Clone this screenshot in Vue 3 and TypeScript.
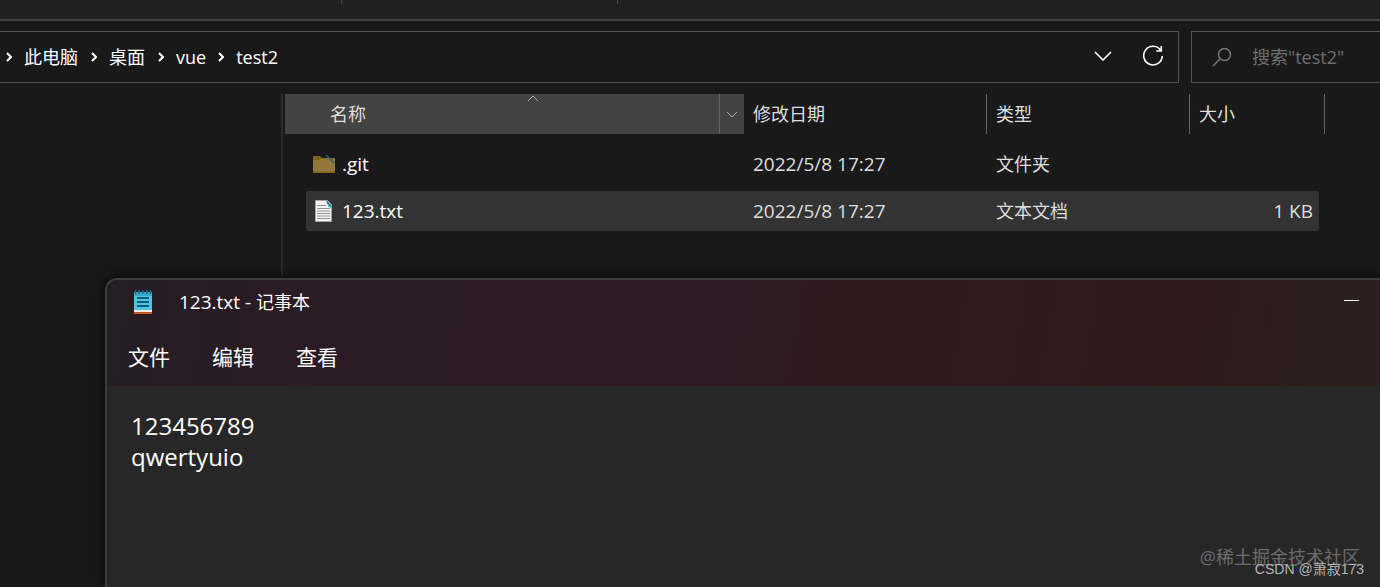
<script setup lang="ts">
import { ref } from 'vue'

interface FileRow {
  name: string
  date: string
  type: string
  size: string
  kind: 'folder' | 'text'
}

const crumbs = ['此电脑', '桌面', 'vue', 'test2']
const files: FileRow[] = [
  { name: '.git', date: '2022/5/8 17:27', type: '文件夹', size: '', kind: 'folder' },
  { name: '123.txt', date: '2022/5/8 17:27', type: '文本文档', size: '1 KB', kind: 'text' },
]
const menus = ['文件', '编辑', '查看']
const selected = ref('123.txt')
const query = ref('')
const content = ref('123456789\nqwertyuio')
const isLatin = (s: string) => /^[\x00-\x7f]*$/.test(s)
</script>

<template>
  <div class="desktop">
    <main class="explorer">
      <div class="ribbon"><i></i><i></i></div>
      <div class="toolbar">
        <div class="address">
          <nav class="crumbs" aria-label="路径">
            <template v-for="c in crumbs" :key="c">
              <svg class="sep" viewBox="0 0 6 10" aria-hidden="true"><path d="M1 1l4 4-4 4" /></svg>
              <a href="#" :class="{ latin: isLatin(c) }">{{ c }}</a>
            </template>
          </nav>
          <button class="tool" type="button" aria-label="历史">
            <svg width="18" height="10" viewBox="0 0 18 10"><path d="M1 1l8 8 8-8" /></svg>
          </button>
          <button class="tool" type="button" aria-label="刷新">
            <svg width="22" height="22" viewBox="0 0 22 22">
              <path d="M18.800 5.500A9.300 9.300 0 1 0 20.300 11M19.300 1V6H14.300" />
            </svg>
          </button>
        </div>
        <label class="search">
          <svg width="20" height="20" viewBox="0 0 20 20" aria-hidden="true">
            <circle cx="12.500" cy="7.500" r="6" /><path d="M8.200 11.800L1 19" />
          </svg>
          <input v-model="query" type="text" aria-label="搜索" placeholder="搜索&quot;test2&quot;" />
        </label>
      </div>
      <div class="panes">
        <aside class="side"></aside>
        <table class="files">
          <colgroup><col class="c-name" /><col class="c-date" /><col class="c-type" /><col class="c-size" /></colgroup>
          <thead>
            <tr>
              <th scope="col">
                <div class="head sorted">
                  <span>名称</span>
                  <svg class="caret" width="12" height="7" viewBox="0 0 12 7" aria-hidden="true"><path d="M1 6l5-5 5 5" /></svg>
                  <button type="button" aria-label="筛选">
                    <svg width="12" height="7" viewBox="0 0 12 7"><path d="M1 1l5 5 5-5" /></svg>
                  </button>
                </div>
              </th>
              <th scope="col"><div class="head">修改日期</div></th>
              <th scope="col"><div class="head">类型</div></th>
              <th scope="col"><div class="head">大小</div></th>
            </tr>
          </thead>
          <tbody>
            <tr v-for="f in files" :key="f.name" :class="{ selected: f.name === selected }" @click="selected = f.name">
              <td>
                <div class="cell name">
                  <svg v-if="f.kind === 'folder'" width="24" height="20" viewBox="0 0 24 20" aria-hidden="true">
                    <path d="M1 3q0-1 1-1h6l2 2h12q1 0 1 1v13q0 1-1 1H2q-1 0-1-1z" fill="#80601f" />
                    <path d="M1 6h7l2-1.500h13V18H1z" fill="#94773b" />
                    <path d="M1 17.500h22V18q0 1-1 1H2q-1 0-1-1z" fill="#80621c" />
                    <path d="M14 1l8 8" stroke="#2d6168" stroke-width="1.600" />
                    <path d="M17 5h4" stroke="#4d6b59" />
                  </svg>
                  <svg v-else width="24" height="24" viewBox="0 0 24 24" aria-hidden="true">
                    <path d="M3.500 1.500h12l4 4v17h-16z" fill="#f4f4f4" stroke="#a5a5a5" />
                    <path d="M5 6.500h9M5 9.500h13M5 12h13M5 14.500h13M5 17h13M5 19.500h13" stroke="#8f9499" />
                    <path d="M14.500 1l5.500 6h-3l-2.500-3z" fill="#2e8299" />
                    <path d="M16 7l4 1.500" stroke="#4eb1c6" stroke-width="1.500" />
                  </svg>
                  <span class="latin">{{ f.name }}</span>
                </div>
              </td>
              <td><div class="cell latin">{{ f.date }}</div></td>
              <td><div class="cell">{{ f.type }}</div></td>
              <td><div class="cell size latin">{{ f.size }}</div></td>
            </tr>
          </tbody>
        </table>
      </div>
    </main>

    <section class="notepad" aria-label="记事本">
      <header>
        <div class="title">
          <svg width="20" height="26" viewBox="0 0 20 26" aria-hidden="true">
            <path d="M1 3h18v18H1z" fill="#52c2e2" />
            <path d="M1 3h18v4H1z" fill="#35aacd" />
            <path d="M1 21h18v2H1z" fill="#f5e9df" />
            <path d="M1 23h18v2H1z" fill="#c0571c" />
            <path d="M2.500 1v4M6.200 1v4M10 1v4M13.800 1v4M17.500 1v4" stroke="#176f8e" stroke-width="1.500" />
            <path d="M4 9h12M4 13h12M4 17h12" stroke="#0b5d78" stroke-width="1.800" />
          </svg>
          <h1><span class="latin">123.txt - </span>记事本</h1>
          <button type="button" aria-label="最小化"></button>
        </div>
        <nav class="menu">
          <button v-for="m in menus" :key="m" type="button">{{ m }}</button>
        </nav>
      </header>
      <textarea v-model="content" aria-label="文本" spellcheck="false"></textarea>
      <span class="mark community">@稀土掘金技术社区</span>
      <span class="mark author">CSDN @萧寂173</span>
    </section>
  </div>
</template>

<style>
body {
  margin: 0;
  background: #191919;
}
</style>

<style scoped>
.desktop {
  position: relative;
  min-height: 100vh;
  overflow: hidden;
  background: #191919;
  color: #fff;
  font-family: 'Open Sans', 'Noto Sans CJK SC', sans-serif;
  font-size: 18px;
  line-height: 24px;
}
.desktop * {
  box-sizing: border-box;
}
.latin {
  font-size: 19px;
}
button {
  border: 0;
  padding: 0;
  background: none;
  color: inherit;
  font: inherit;
}
svg {
  flex: none;
  display: block;
  fill: none;
}
.ribbon {
  display: flex;
  height: 21px;
  background: #202020;
  border-bottom: 2px solid #414141;
}
.ribbon i {
  width: 276px;
  height: 4px;
  border-right: 1px solid #444;
}
.ribbon i:first-child {
  width: 342px;
}
.toolbar {
  display: flex;
  gap: 12px;
  padding-top: 10px;
}
.address {
  flex: 1;
  display: flex;
  align-items: center;
  height: 52px;
  border: 1px solid #535353;
  border-left: 0;
}
.crumbs {
  flex: 1;
  display: flex;
  align-items: center;
  padding-left: 6px;
}
.crumbs a {
  margin: 0 13px 0 12px;
  color: #fff;
  text-decoration: none;
}
.crumbs .latin {
  margin: 0 12px 0 12px;
  font-size: 18px;
}
.sep {
  width: 6px;
  height: 10px;
  stroke: #fff;
  stroke-width: 2;
}
.tool {
  width: 50px;
  height: 50px;
  display: grid;
  place-items: center;
  padding-bottom: 2px;
  stroke: #fff;
  stroke-width: 1.6;
}
.search {
  width: 189px;
  display: flex;
  align-items: center;
  gap: 20px;
  padding-left: 20px;
  border: 1px solid #535353;
  border-right: 0;
}
.search svg {
  stroke: #777;
  stroke-width: 1.5;
}
.search input {
  flex: 1;
  min-width: 0;
  padding: 0;
  border: 0;
  outline: 0;
  background: none;
  color: #fff;
  font: inherit;
}
.search input::placeholder {
  color: #6e6e6e;
  opacity: 1;
}
.panes {
  display: flex;
  margin-top: 11px;
}
.side {
  width: 285px;
  height: 493px;
  background: linear-gradient(#2b2b2b, #2b2b2b) 281px 0 / 2px 100% no-repeat;
}
.files {
  width: 1040px;
  table-layout: fixed;
  border-collapse: collapse;
  align-self: flex-start;
  color: #dedede;
}
.c-name {
  width: 459px;
}
.c-date {
  width: 243px;
}
.c-type {
  width: 203px;
}
.c-size {
  width: 135px;
}
.files th {
  padding: 0 0 7px;
  font-weight: 400;
  text-align: left;
}
.files td {
  padding: 3px 0 4px;
}
.head {
  height: 40px;
  padding-left: 9px;
  border-right: 1px solid #636363;
  line-height: 40px;
}
.head.sorted {
  display: grid;
  grid-template-columns: auto 1fr 25px;
  padding-left: 45px;
  border: 0;
  background: #434343;
}
.sorted svg {
  stroke: #aaa;
}
.sorted .caret {
  margin: 1px 20px 0 0;
  justify-self: center;
}
.sorted button {
  display: grid;
  place-items: center;
  border-left: 1px solid #636363;
}
.cell {
  display: flex;
  align-items: center;
  height: 40px;
  padding-left: 9px;
}
.cell.name {
  gap: 6px;
  margin-left: 21px;
  padding-left: 6px;
  color: #fff;
}
.cell.size {
  justify-content: flex-end;
  margin-right: 6px;
  padding-right: 6px;
}
.selected .cell {
  background: #333;
}
.selected .name {
  border-radius: 2px 0 0 2px;
}
.selected .size {
  border-radius: 0 2px 2px 0;
}
.notepad {
  position: absolute;
  top: 278px;
  right: 0;
  bottom: 0;
  left: 105px;
  display: flex;
  flex-direction: column;
  overflow: hidden;
  border: solid #3c3c3c;
  border-width: 2px 0 0 2px;
  border-radius: 12px 0 0 0;
  background: #272727;
  box-shadow: 0 0 14px 2px #0009;
}
.notepad header {
  background: linear-gradient(100deg, #251e22 0%, #2b1b25 18%, #2c1b22 50%, #2e1a1d 62%, #301a1b 76%, #2c1b1a 86%, #2b201c 100%);
}
.title {
  display: flex;
  align-items: center;
  height: 44px;
  padding-left: 26px;
}
h1 {
  flex: 1;
  margin: 0 0 0 26px;
  font-size: 18px;
  font-weight: 400;
  white-space: pre;
}
.title button {
  width: 57px;
  height: 44px;
  background: linear-gradient(#fff, #fff) 21px 20px / 15px 1px no-repeat;
}
.menu {
  display: flex;
  gap: 42px;
  height: 62px;
  padding: 4px 0 0 21px;
  font-size: 21px;
}
textarea {
  flex: 1;
  display: block;
  padding: 24px;
  border: 0;
  outline: 0;
  resize: none;
  background: #272727;
  color: #fff;
  font: 24px/31px 'Open Sans', 'Noto Sans CJK SC', sans-serif;
}
.mark {
  position: absolute;
  white-space: nowrap;
}
.community {
  right: 20px;
  bottom: 18px;
  color: #6c6c6c;
}
.author {
  right: 16px;
  bottom: 8px;
  color: #b4b4b4;
  font: 14px/20px 'Liberation Sans', 'Noto Sans CJK SC', sans-serif;
}
</style>
